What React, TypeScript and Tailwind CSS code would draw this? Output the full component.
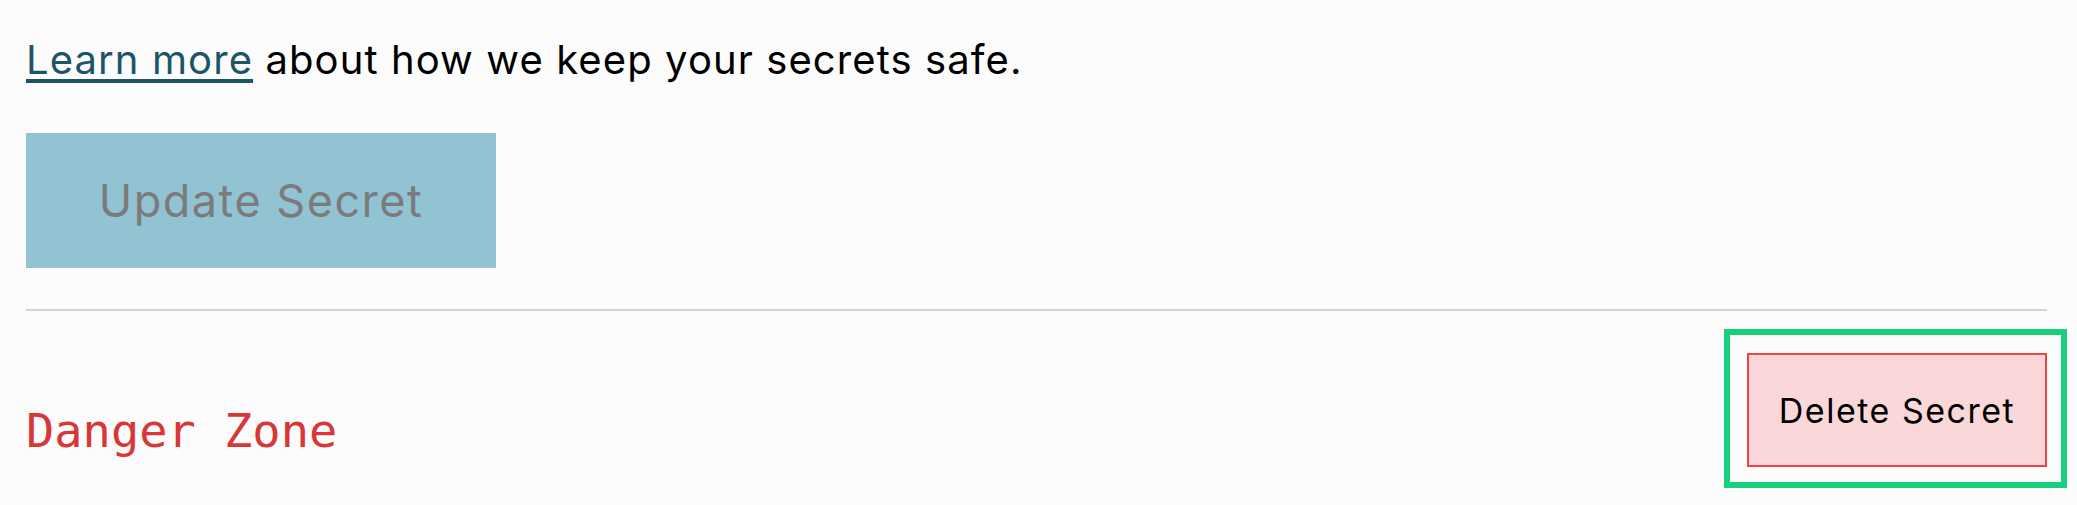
import React from "react";

export default function App() {
  return (
    <div className="min-h-[505px] w-full bg-[#fcfcfc] pl-[26px] pr-[30px] pt-[36px] font-['Inter',sans-serif]">
      {/* Intro line */}
      <p className="text-[40px] leading-[48px] tracking-[1.1px] text-black">
        <a
          href="#"
          className="text-[#1b5567] underline decoration-[4px] underline-offset-[5px]"
        >
          Learn more
        </a>{" "}
        about how we keep your secrets safe.
      </p>

      {/* Update button (disabled look) */}
      <button
        type="button"
        className="mt-[49px] flex h-[135px] w-[470px] items-center justify-center bg-[#92c3d3] text-[45px] tracking-[1.5px] text-[#7b7b7b]"
      >
        Update Secret
      </button>

      <hr className="mt-[41px] border-0 border-t-2 border-[#d4d4d4]" />

      {/* Danger zone row */}
      <div className="mt-[18px] flex items-end justify-between">
        <h2 className="mb-[34px] font-['DejaVu_Sans_Mono',monospace] text-[47px] leading-none text-[#d93636]">
          Danger Zone
        </h2>
        <div className="-mr-[20px] border-[6px] border-[#17cf7d] pb-[15px] pl-[17px] pr-[14px] pt-[18px]">
          <button
            type="button"
            className="flex h-[114px] w-[300px] items-center justify-center border-2 border-[#ef4444] bg-[#fad7d8] text-[34px] tracking-[1.5px] text-black"
          >
            Delete Secret
          </button>
        </div>
      </div>
    </div>
  );
}
